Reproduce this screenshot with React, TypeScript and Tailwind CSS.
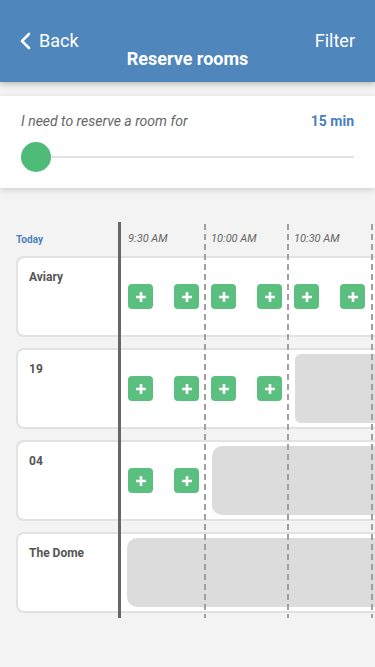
import React from "react";

interface Room {
  name: string;
  // half-hour slots filled with add buttons before the booked block starts
  free: number;
  booked: boolean;
}

const rooms: Room[] = [
  { name: "Aviary", free: 3, booked: false },
  { name: "19", free: 2, booked: true },
  { name: "04", free: 1, booked: true },
  { name: "The Dome", free: 0, booked: true },
];

const times = ["9:30 AM", "10:00 AM", "10:30 AM"];

function PlusButton() {
  return (
    <button
      type="button"
      className="flex h-[25px] w-[25px] shrink-0 items-center justify-center rounded-[4px] bg-[#5bbf7f]"
    >
      <svg width="12" height="12" viewBox="0 0 12 12">
        <path d="M6 1v10M1 6h10" stroke="white" strokeWidth="2.6" />
      </svg>
    </button>
  );
}

function SlotButtons() {
  return (
    <div className="flex w-[83px] shrink-0 items-center gap-[21px] pl-[7px]">
      <PlusButton />
      <PlusButton />
    </div>
  );
}

export default function App() {
  return (
    <div className="min-h-screen overflow-hidden bg-[#f3f3f3] font-['Roboto',sans-serif]">
      {/* Header */}
      <header className="relative h-[82px] bg-[#4f86bc] shadow-[0_2px_6px_rgba(0,0,0,0.25)]">
        <div className="flex items-center justify-between px-[20px] pt-[29px] text-[18px] leading-[24px] text-white">
          <button type="button" className="flex items-center gap-[8px]">
            <svg width="11" height="18" viewBox="0 0 11 18">
              <path d="M9 2 2 9l7 7" stroke="white" strokeWidth="2.6" fill="none" strokeLinecap="round" strokeLinejoin="round" />
            </svg>
            <span>Back</span>
          </button>
          <button type="button">Filter</button>
        </div>
        <h1 className="-mt-[5px] text-center text-[18px] font-bold leading-[22px] text-white">Reserve rooms</h1>
      </header>

      {/* Duration card */}
      <div className="mt-[14px] bg-white px-[21px] pb-[16px] pt-[15px] shadow-[0_2px_6px_rgba(0,0,0,0.15)]">
        <div className="flex items-center justify-between text-[14px]">
          <span className="italic text-[#666]">I need to reserve a room for</span>
          <span className="font-bold text-[#4a80bd]">15 min</span>
        </div>
        <div className="mt-[10px] flex items-center">
          <div className="h-[30px] w-[30px] shrink-0 rounded-full bg-[#4fbb78]" />
          <div className="h-[2px] flex-1 bg-[#e3e3e3]" />
        </div>
      </div>

      {/* Timeline */}
      <div className="relative mt-[34px] pb-[5px]">
        <div className="flex h-[34px] items-center">
          <span className="w-[121px] pl-[16px] text-[10px] font-bold text-[#4a80bd]">Today</span>
          {times.map((t) => (
            <span key={t} className="w-[83px] shrink-0 pl-[7px] text-[11px] italic text-[#666]">
              {t}
            </span>
          ))}
        </div>

        <div className="flex flex-col gap-[11px]">
          {rooms.map((r) => (
            <div
              key={r.name}
              className="ml-[16px] flex h-[81px] rounded-l-[8px] border-2 border-r-0 border-[#e2e2e2] bg-white"
            >
              <div className="w-[103px] shrink-0 pl-[11px] pt-[10px] text-[12px] font-bold text-[#555]">{r.name}</div>
              <div className="flex flex-1 items-center">
                {Array.from({ length: r.free }).map((_, i) => (
                  <SlotButtons key={i} />
                ))}
                {r.booked && (
                  <div
                    className={`h-[69px] flex-1 bg-[#dcdcdc] ${r.free === 2 ? "ml-[8px] rounded-l-[6px]" : r.free === 1 ? "ml-[8px] rounded-l-[10px]" : "ml-[6px] rounded-l-[10px]"}`}
                  />
                )}
              </div>
            </div>
          ))}
        </div>

        {/* now line + half-hour guides */}
        <div className="absolute left-[118px] top-0 bottom-0 w-[3px] bg-[#666]" />
        {[204, 287, 371].map((x) => (
          <div
            key={x}
            className="absolute top-[2px] bottom-0 w-[2px] bg-[repeating-linear-gradient(to_bottom,#a0a0a0_0px,#a0a0a0_6px,transparent_6px,transparent_10px)]"
            style={{ left: x }}
          />
        ))}
      </div>
    </div>
  );
}
